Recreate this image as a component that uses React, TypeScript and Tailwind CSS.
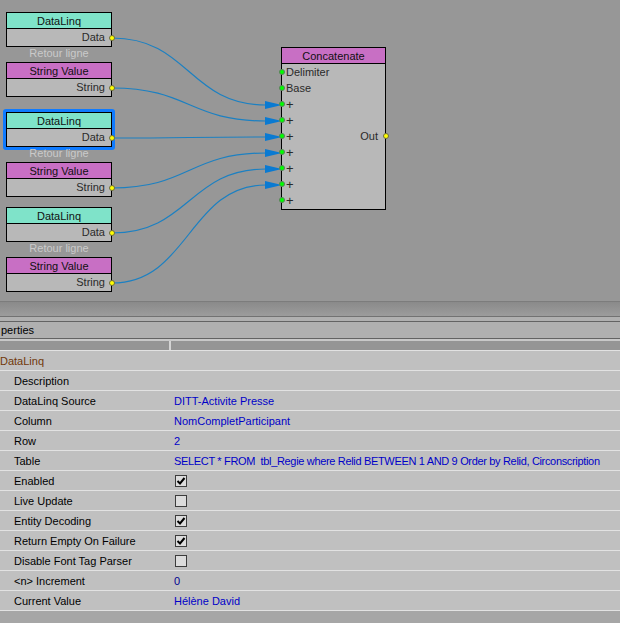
import React from "react";

const FONT = { fontFamily: '"Liberation Sans", Arial, sans-serif' };

type NodeProps = {
  x: number;
  y: number;
  title: string;
  header: string;
  port: string;
  selected?: boolean;
};

function SourceNode({ x, y, title, header, port, selected }: NodeProps) {
  return (
    <div className="absolute w-[106px] h-[35px]" style={{ left: x, top: y }}>
      {selected && (
        <div className="absolute -inset-[3px] rounded-[3px] border-[3px] border-[#0f7bff]" />
      )}
      <div className="relative flex flex-col w-full h-full border border-black bg-[#b8b8b8]">
        <div
          className={`h-[16px] flex items-center justify-center pt-[1px] border-b border-black text-[11px] text-[#111] ${header}`}
        >
          {title}
        </div>
        <div className="h-[16px] flex items-center justify-end pt-[1px] pr-[6px] text-[11px] text-[#2a2a2a]">
          {port}
        </div>
      </div>
      <div className="absolute right-[-3px] top-[23px] w-[6px] h-[6px] rounded-full bg-[#ffff00] border border-[#6a6a40]" />
    </div>
  );
}

function RetourLabel({ y }: { y: number }) {
  return (
    <div
      className="absolute left-[6px] w-[106px] text-center text-[11px] leading-[14px] text-[#cacaca]"
      style={{ top: y }}
    >
      Retour ligne
    </div>
  );
}

function ConcatNode() {
  const rows = ["Delimiter", "Base", "+", "+", "+", "+", "+", "+", "+"];
  return (
    <div className="absolute left-[281px] top-[47px] w-[105px] h-[163px] border border-black bg-[#b8b8b8] flex flex-col">
      <div className="h-[16px] flex items-center justify-center pt-[1px] border-b border-black bg-[#c86fc4] text-[11px] text-[#111]">
        Concatenate
      </div>
      {rows.map((r, i) => (
        <div key={i} className="relative h-[16px] flex items-center pt-[1px] pl-[4px] text-[11px] text-[#2a2a2a]">
          <div className="absolute left-[-3px] top-[5px] w-[6px] h-[6px] rounded-full bg-[#00ff00] border border-[#5a805a]" />
          <span className={r === "+" ? "text-[13px] leading-[13px]" : ""}>{r}</span>
          {i === 4 && (
            <>
              <span className="ml-auto mr-[7px]">Out</span>
              <div className="absolute right-[-4px] top-[5px] w-[6px] h-[6px] rounded-full bg-[#ffff00] border border-[#6a6a40]" />
            </>
          )}
        </div>
      ))}
    </div>
  );
}

function Wires() {
  const starts = [38, 88, 138, 188, 233, 283];
  const ends = [105, 121, 137, 153, 169, 185];
  return (
    <svg className="absolute inset-0 pointer-events-none" width={620} height={301}>
      {starts.map((sy, i) => {
        const ey = ends[i];
        const sx = 112;
        const ex = 266;
        const mx = (sx + ex) / 2;
        return (
          <g key={i}>
            <path
              d={`M ${sx} ${sy} C ${mx} ${sy}, ${mx} ${ey}, ${ex} ${ey}`}
              fill="none"
              stroke="#1c80c2"
              strokeWidth={1.2}
            />
            <polygon points={`${ex - 1},${ey - 4} 282,${ey} ${ex - 1},${ey + 4}`} fill="#0a7ad2" />
          </g>
        );
      })}
    </svg>
  );
}

function Check({ checked }: { checked: boolean }) {
  return (
    <div className="w-[12px] h-[12px] border border-[#3c3c3c] bg-[#dcdcdc] flex items-center justify-center">
      {checked && (
        <svg width="10" height="10" viewBox="0 0 10 10">
          <path d="M1.5 5 L4 7.5 L8.5 2" fill="none" stroke="#000" strokeWidth={2} />
        </svg>
      )}
    </div>
  );
}

type Row = { label: string; value?: string; check?: boolean; dark?: boolean; tight?: boolean };

const rows: Row[] = [
  { label: "Description" },
  { label: "DataLinq Source", value: "DITT-Activite Presse" },
  { label: "Column", value: "NomCompletParticipant" },
  { label: "Row", value: "2" },
  {
    label: "Table",
    value: "SELECT * FROM\u00a0 tbl_Regie where Relid BETWEEN 1 AND 9 Order by Relid, Circonscription",
    tight: true,
  },
  { label: "Enabled", check: true },
  { label: "Live Update", check: false },
  { label: "Entity Decoding", check: true },
  { label: "Return Empty On Failure", check: true },
  { label: "Disable Font Tag Parser", check: false },
  { label: "<n> Increment", value: "0", dark: true },
  { label: "Current Value", value: "Hélène David" },
];

export default function App() {
  return (
    <div className="w-[620px] h-[623px] overflow-hidden flex flex-col bg-[#c0c0c0]" style={FONT}>
      {/* Canvas */}
      <div className="relative h-[301px] shrink-0 bg-[#979797] overflow-hidden">
        <Wires />
        <SourceNode x={6} y={12} title="DataLinq" header="bg-[#7fe3c9]" port="Data" />
        <RetourLabel y={46} />
        <SourceNode x={6} y={62} title="String Value" header="bg-[#c86fc4]" port="String" />
        <SourceNode x={6} y={112} title="DataLinq" header="bg-[#7fe3c9]" port="Data" selected />
        <RetourLabel y={146} />
        <SourceNode x={6} y={162} title="String Value" header="bg-[#c86fc4]" port="String" />
        <SourceNode x={6} y={207} title="DataLinq" header="bg-[#7fe3c9]" port="Data" />
        <RetourLabel y={241} />
        <SourceNode x={6} y={257} title="String Value" header="bg-[#c86fc4]" port="String" />
        <ConcatNode />
      </div>

      {/* Splitter */}
      <div className="h-[1px] shrink-0 bg-[#7c7c7c]" />
      <div className="h-[14px] shrink-0 bg-gradient-to-b from-[#8a8a8a] to-[#9c9c9c]" />
      <div className="h-[1px] shrink-0 bg-[#727272]" />
      <div className="h-[4px] shrink-0 bg-[#b0b0b0]" />
      <div className="h-[1px] shrink-0 bg-[#636363]" />

      {/* Title bar */}
      <div className="h-[16px] shrink-0 bg-[#b0b0b0] flex items-center pt-[1px]">
        <span className="ml-[1px] text-[11px] text-black whitespace-nowrap">perties</span>
      </div>
      <div className="h-[1px] shrink-0 bg-[#636363]" />
      <div className="h-[2px] shrink-0 bg-[#c8c8c8]" />

      {/* Column header */}
      <div className="h-[9px] shrink-0 flex bg-[#959595]">
        <div className="w-[169px] shrink-0" />
        <div className="w-[2px] shrink-0 bg-[#d4d4d4]" />
      </div>
      <div className="h-[1px] shrink-0 bg-[#e2e2e2]" />

      {/* Rows */}
      <div className="h-[20px] shrink-0 flex items-center pt-[1px] border-b border-[#e2e2e2]">
        <span className="text-[11px] text-[#703808]">DataLinq</span>
      </div>
      {rows.map((r) => (
        <div
          key={r.label}
          className="h-[20px] shrink-0 flex items-center pt-[1px] border-b border-[#e2e2e2] text-[11px] whitespace-nowrap"
        >
          <div className="w-[174px] shrink-0 pl-[14px] text-black">{r.label}</div>
          <div className="flex-1 min-w-0 flex items-center">
            {r.check !== undefined ? (
              <div className="ml-[1px]">
                <Check checked={r.check} />
              </div>
            ) : (
              <span
                className={`${r.dark ? "text-[#000090]" : "text-[#0000c8]"} ${r.tight ? "tracking-[-0.33px]" : ""}`}
              >
                {r.value}
              </span>
            )}
          </div>
        </div>
      ))}
      <div className="flex-1 bg-[#a6a6a6]" />
    </div>
  );
}
